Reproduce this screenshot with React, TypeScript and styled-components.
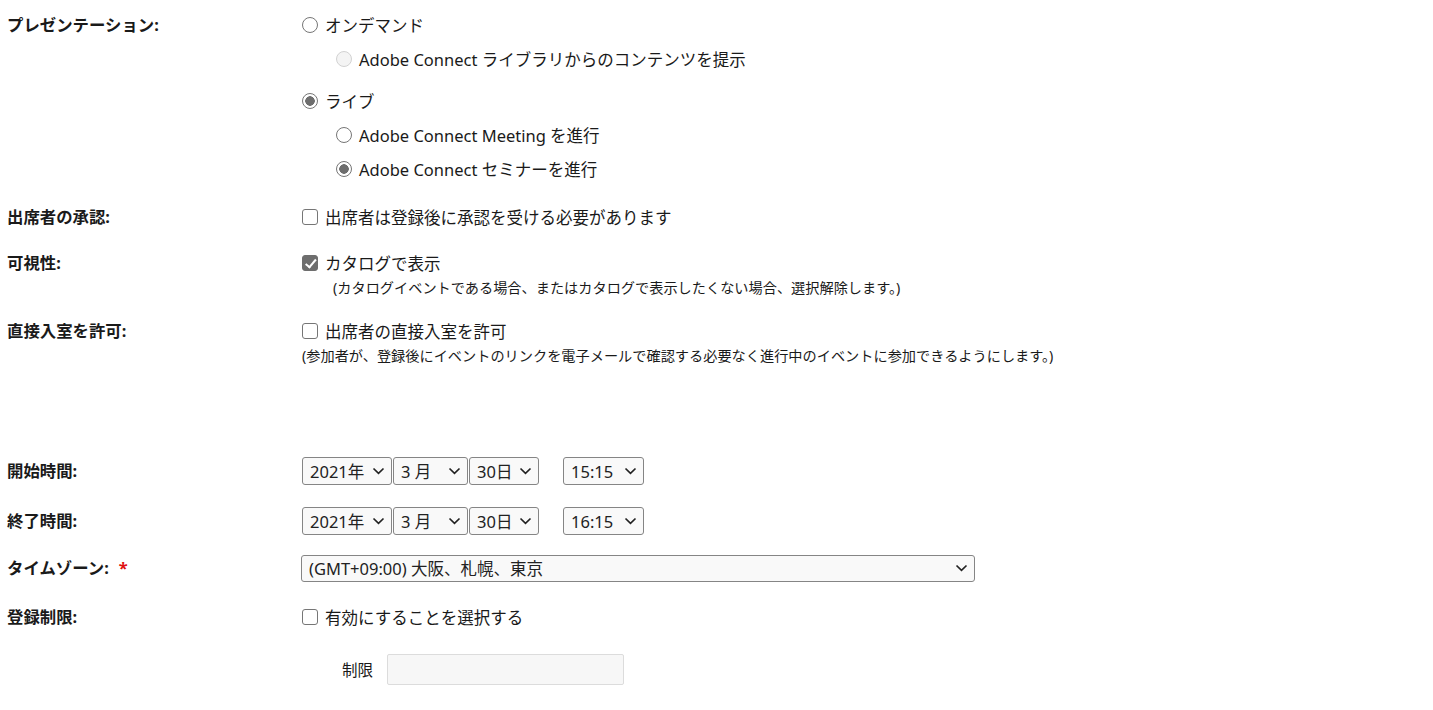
import styled, { createGlobalStyle } from "styled-components";

const GlobalStyle = createGlobalStyle`
  body {
    margin: 0;
    background: #fff;
    color: #1a1a1a;
    font-family: "Noto Sans", "Noto Sans CJK JP", sans-serif;
  }
`;

const Page = styled.div`
  padding: 8px 0 0 7px;
`;

const Row = styled.div<{ $top?: number }>`
  display: grid;
  grid-template-columns: 295px 1fr;
  align-items: start;
  margin-top: ${(p) => p.$top ?? 0}px;
`;

const Label = styled.div`
  font-size: 16.4px;
  font-weight: 700;
  line-height: 34px;
  display: flex;
  gap: 10px;
`;

const Required = styled.span`
  color: #e01010;
`;

const Group = styled.div<{ $gap?: number }>`
  display: flex;
  flex-direction: column;
  gap: ${(p) => p.$gap ?? 0}px;
`;

const Option = styled.label<{ $indent?: number }>`
  display: flex;
  align-items: center;
  gap: 7px;
  height: 34px;
  padding-left: ${(p) => p.$indent ?? 0}px;
  font-size: 16.5px;
  color: #1a1a1a;
`;

const Radio = styled.input.attrs({ type: "radio" })`
  appearance: none;
  margin: 0;
  width: 16px;
  height: 16px;
  border-radius: 50%;
  border: 1px solid #767676;
  background: #fff;
  flex: none;

  &:checked {
    background: radial-gradient(circle, #6e6e6e 0 4.5px, #fff 5px);
  }

  &:disabled {
    border-color: #d2d2d2;
    background: #f4f4f4;
  }
`;

const Check = styled.input.attrs({ type: "checkbox" })`
  appearance: none;
  margin: 0;
  width: 16px;
  height: 16px;
  border-radius: 3px;
  border: 1px solid #767676;
  background: #fff;
  flex: none;
  position: relative;

  &:checked {
    background: #6e6e6e;
    border-color: #6e6e6e;
  }

  &:checked::after {
    content: "";
    position: absolute;
    left: 4.5px;
    top: 1px;
    width: 4px;
    height: 8.5px;
    border: solid #fff;
    border-width: 0 2px 2px 0;
    transform: rotate(40deg);
  }
`;

const Note = styled.div<{ $indent?: number }>`
  font-size: 14.2px;
  line-height: 16px;
  padding-left: ${(p) => p.$indent ?? 0}px;
  color: #1a1a1a;
`;

const Selects = styled.div`
  display: flex;
  align-items: center;
  height: 34px;
`;

const SelectWrap = styled.div<{ $w: number; $h?: number; $ml?: number }>`
  position: relative;
  width: ${(p) => p.$w}px;
  height: ${(p) => p.$h ?? 28}px;
  margin-left: ${(p) => p.$ml ?? 0}px;
  margin-right: 1px;
`;

const Select = styled.select`
  appearance: none;
  width: 100%;
  height: 100%;
  margin: 0;
  padding: 0 0 0 7px;
  border: 1px solid #858585;
  border-radius: 3px;
  background: #f9f9f9;
  color: #222;
  font-family: "Noto Sans", "Noto Sans CJK JP", sans-serif;
  font-size: 16.5px;
`;

const Chevron = styled.svg`
  position: absolute;
  right: 7px;
  top: 50%;
  margin-top: -4px;
  width: 13px;
  height: 8px;
  pointer-events: none;
`;

const LimitRow = styled.div`
  display: flex;
  align-items: center;
  gap: 14px;
  height: 34px;
  margin-top: 18px;
  padding-left: 40px;
  font-size: 15.5px;
`;

const LimitInput = styled.input`
  width: 237px;
  height: 31px;
  box-sizing: border-box;
  border: 1px solid #dcdcdc;
  border-radius: 2px;
  background: #f7f7f7;
`;

function Dropdown({
  w,
  h,
  ml,
  value,
}: {
  w: number;
  h?: number;
  ml?: number;
  value: string;
}) {
  return (
    <SelectWrap $w={w} $h={h} $ml={ml}>
      <Select defaultValue={value}>
        <option>{value}</option>
      </Select>
      <Chevron viewBox="0 0 13 8">
        <path d="M1.5 1.5 6.5 6.3l5-4.8" fill="none" stroke="#222" strokeWidth="1.7" />
      </Chevron>
    </SelectWrap>
  );
}

function DateTime({ time }: { time: string }) {
  return (
    <Selects>
      <Dropdown w={90} value="2021年" />
      <Dropdown w={75} value="3 月" />
      <Dropdown w={70} value="30日" />
      <Dropdown w={81} ml={23} value={time} />
    </Selects>
  );
}

export default function App() {
  return (
    <Page>
      <GlobalStyle />
      <Row>
        <Label>プレゼンテーション:</Label>
        <Group $gap={8}>
          <Group>
            <Option>
              <Radio name="pres" />
              オンデマンド
            </Option>
            <Option $indent={34}>
              <Radio name="sub1" disabled />
              Adobe Connect ライブラリからのコンテンツを提示
            </Option>
          </Group>
          <Group>
            <Option>
              <Radio name="pres" defaultChecked />
              ライブ
            </Option>
            <Option $indent={34}>
              <Radio name="live" />
              Adobe Connect Meeting を進行
            </Option>
            <Option $indent={34}>
              <Radio name="live" defaultChecked />
              Adobe Connect セミナーを進行
            </Option>
          </Group>
        </Group>
      </Row>

      <Row $top={14}>
        <Label>出席者の承認:</Label>
        <Option>
          <Check />
          出席者は登録後に承認を受ける必要があります
        </Option>
      </Row>

      <Row $top={12}>
        <Label>可視性:</Label>
        <Group>
          <Option>
            <Check defaultChecked />
            カタログで表示
          </Option>
          <Note $indent={31}>
            (カタログイベントである場合、またはカタログで表示したくない場合、選択解除します。)
          </Note>
        </Group>
      </Row>

      <Row $top={18}>
        <Label>直接入室を許可:</Label>
        <Group>
          <Option>
            <Check />
            出席者の直接入室を許可
          </Option>
          <Note>
            (参加者が、登録後にイベントのリンクを電子メールで確認する必要なく進行中のイベントに参加できるようにします。)
          </Note>
        </Group>
      </Row>

      <Row $top={90}>
        <Label>開始時間:</Label>
        <DateTime time="15:15" />
      </Row>

      <Row $top={16}>
        <Label>終了時間:</Label>
        <DateTime time="16:15" />
      </Row>

      <Row $top={13}>
        <Label>
          タイムゾーン:<Required>*</Required>
        </Label>
        <Selects>
          <Dropdown w={674} h={27} ml={-1} value="(GMT+09:00) 大阪、札幌、東京" />
        </Selects>
      </Row>

      <Row $top={15}>
        <Label>登録制限:</Label>
        <Group>
          <Option>
            <Check />
            有効にすることを選択する
          </Option>
          <LimitRow>
            制限
            <LimitInput />
          </LimitRow>
        </Group>
      </Row>
    </Page>
  );
}
